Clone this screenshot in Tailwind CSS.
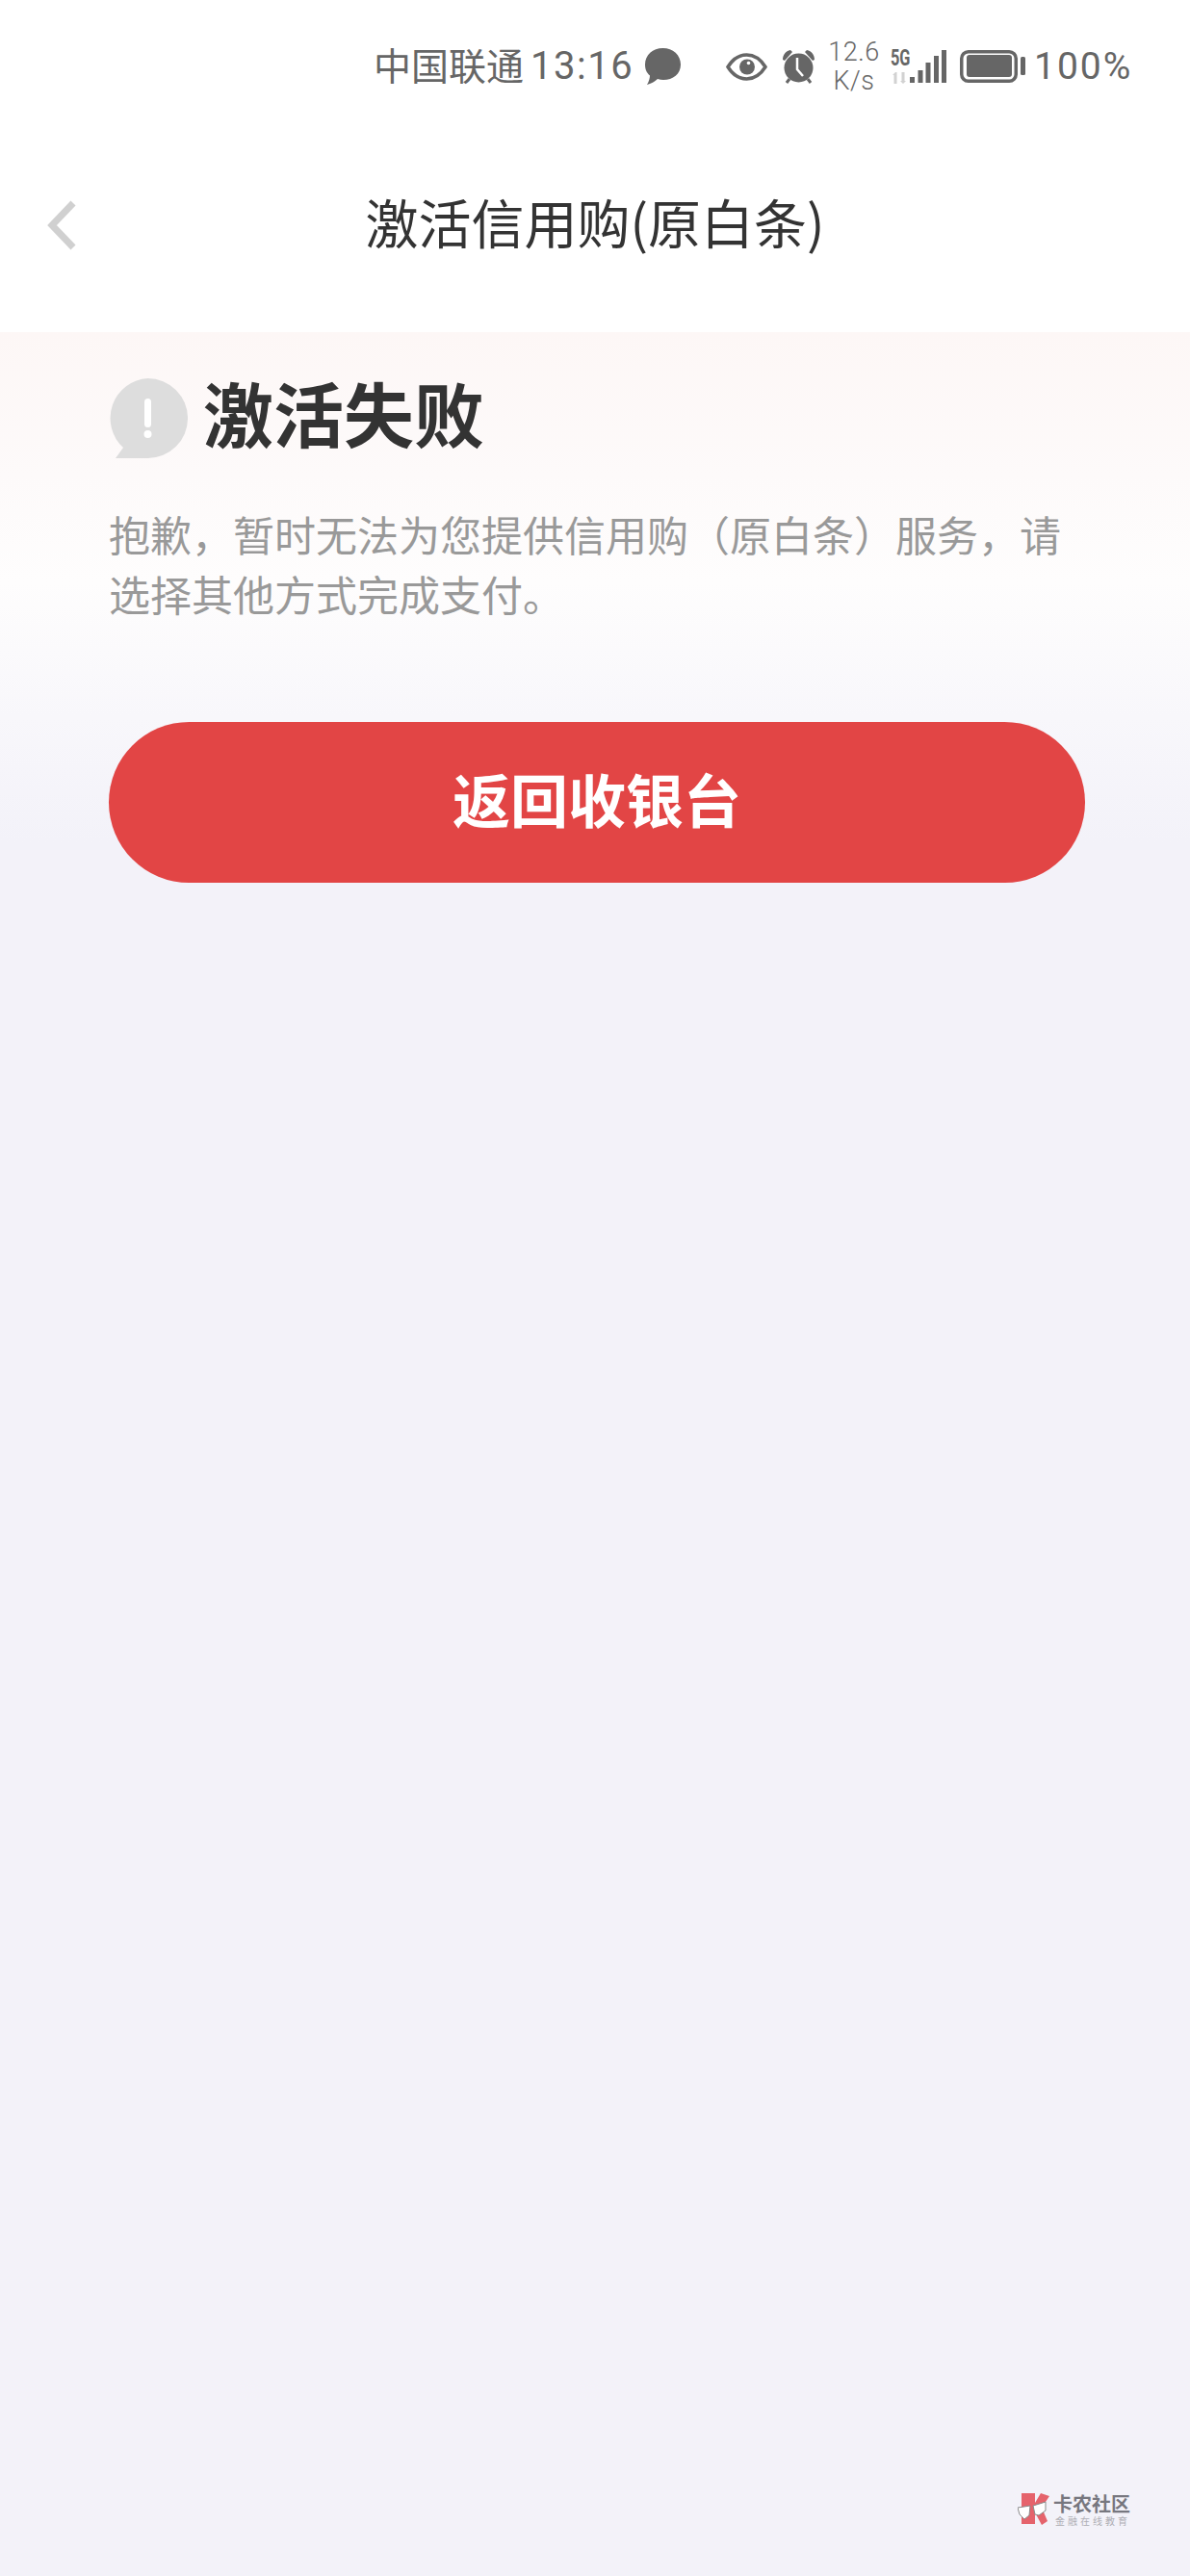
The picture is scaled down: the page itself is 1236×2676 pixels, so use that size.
<!DOCTYPE html>
<html lang="zh-CN">
<head>
    <meta charset="utf-8"/>
    <meta content="width=device-width, initial-scale=1.0" name="viewport"/>
    <title>激活信用购</title>
    <script src="https://cdn.jsdelivr.net/npm/@tailwindcss/browser@4"></script>
</head>
<body class="bg-[#f3f2f9] font-['Noto_Sans_CJK_SC','Noto_Sans',sans-serif] antialiased">
    <div class="relative flex h-[2676px] w-[1236px] flex-col overflow-hidden">
        <!-- Status bar -->
        <div class="flex h-[138px] items-center bg-white pl-[388px] text-[#666666]">
            <span class="mb-[6px] w-[156px] text-[39px] leading-none">中国联通</span>
            <span class="ml-[7px] w-[104px] font-['Roboto',sans-serif] text-[40px] leading-none tracking-[1.5px]">13:16</span>
            <svg class="ml-[14px] h-[38px] w-[38px]" viewBox="0 0 38 38" fill="#666666"><path d="M19.500 0C30 0 38 7 38 17C38 27 30 33 20 33C18 33 16 32.500 14 32C11 35 7 37 3 38C5 35 6 31 6 28.500C2 25 1 21 1 17C1 7 9 0 19.500 0Z"/></svg>
            <svg class="ml-[47px] h-[29px] w-[43px]" viewBox="0 0 43 29"><path d="M2 14.500C8 5 15 2 21.500 2C28 2 35 5 41 14.500C35 24 28 27 21.500 27C15 27 8 24 2 14.500Z" fill="none" stroke="#666666" stroke-width="3.500"/><circle cx="22" cy="14.500" r="8" fill="#666666"/><circle cx="23.500" cy="10.500" r="1.800" fill="#ffffff"/></svg>
            <svg class="ml-[15px] h-[36px] w-[35px]" viewBox="0 0 35 36" fill="#666666"><circle cx="17.500" cy="19.500" r="15"/><path d="M1 11C1 6 4 2 9 1L11 3L3 12ZM34 11C34 6 31 2 26 1L24 3L32 12Z"/><path d="M8 31L5 35M27 31L30 35" stroke="#666666" stroke-width="3"/><path d="M16 9V21L22 28" fill="none" stroke="#ffffff" stroke-width="2.500"/></svg>
            <div class="ml-[12px] flex w-[56px] flex-col items-center font-['Roboto',sans-serif] text-[27px] font-light leading-[30px] tracking-[0.5px]">
                <span>12.6</span>
                <span>K/s</span>
            </div>
            <div class="relative ml-[10px] h-[36px] w-[58px]">
                <span class="absolute left-0 top-[-3px] origin-left scale-x-[.68] font-['Roboto',sans-serif] text-[24px] font-bold leading-[24px]">5G</span>
                <svg class="absolute inset-0 h-[36px] w-[58px]" viewBox="0 0 58 36"><path d="M5 24L2 27H3.500V36H6.500V24ZM13 36L10 33H11.500V24H14.500V33H16L13 36" fill="#d2d2d2"/><path d="M20 29H25V35H20ZM28.500 22H33.500V35H28.500ZM36.500 14H41.500V35H36.500ZM45 7H50V35H45ZM53 1H58V35H53Z" fill="#666666"/></svg>
            </div>
            <svg class="ml-[14px] h-[34px] w-[68px]" viewBox="0 0 68 34"><rect x="1.750" y="1.750" width="56.500" height="30.500" rx="7" fill="none" stroke="#666666" stroke-width="3.500"/><rect x="7" y="5" width="47" height="23" rx="3" fill="#666666"/><rect x="63" y="7" width="5" height="19" rx="1.500" fill="#666666"/></svg>
            <span class="ml-[9px] font-['Roboto',sans-serif] text-[39px] leading-none tracking-[2px]">100%</span>
        </div>

        <!-- Title bar -->
        <div class="relative flex h-[207px] justify-center bg-white pt-[55px]">
            <svg class="absolute left-[47px] top-[69px] h-[54px] w-[34px]" viewBox="0 0 34 54" fill="none" stroke="#d0d0d0" stroke-width="7"><path d="M29 4L7 27L29 50"/></svg>
            <h1 class="text-[55px] leading-[72px] text-[#333333]">激活信用购(原白条)</h1>
        </div>

        <!-- Result -->
        <div class="flex-1 bg-[linear-gradient(to_bottom,#fdf7f6_0px,#fdfafa_150px,#fefdfd_260px,#f8f7fb_400px,#f3f2f9_530px)] px-[113px]">
            <div class="mt-[48px] flex items-center">
                <svg class="-ml-[1px] h-[83px] w-[83px] shrink-0" viewBox="0 0 83 83"><path d="M41.500 0A41.500 41.500 0 1 1 41.500 83H8L16 72A41.500 41.500 0 0 1 41.500 0Z" fill="#dddddd"/><rect x="38" y="21" width="7" height="30" rx="3.500" fill="#ffffff"/><circle cx="41.500" cy="58" r="4" fill="#ffffff"/></svg>
                <h2 class="mb-[16px] ml-[16px] text-[73px] font-bold leading-[66px] text-[#333333]">激活失败</h2>
            </div>
            <p class="mt-[47px] text-[43px] leading-[62px] text-[#999999]">抱歉，暂时无法为您提供信用购（原白条）服务，请选择其他方式完成支付。</p>
            <button class="mt-[103px] flex h-[167px] w-[1014px] items-center justify-center rounded-full bg-[#e24545] pb-[10px] text-[60px] font-bold text-white">返回收银台</button>
        </div>

        <!-- Watermark -->
        <div class="absolute left-[1057px] top-[2588px] flex">
            <svg class="h-[36px] w-[34px]" viewBox="0 0 34 36"><path d="M4 2H18V12L24 2L33 5L25 17L31 31L25 35L18 22V34H4Z" fill="#e5636c"/><path d="M0 17L13 15L12 25L7 29L2 24ZM16 15L29 11L29 20L22 25L18 24Z" fill="#ffffff" stroke="#8a8a8a" stroke-width="1"/></svg>
            <div class="ml-[3px] flex flex-col pt-[3px]">
                <span class="text-[20px] font-bold leading-[20px] text-[#77777f]">卡农社区</span>
                <span class="ml-[2px] mt-[2px] text-[10px] leading-[12px] tracking-[3px] text-[#aeaeb4]">金融在线教育</span>
            </div>
        </div>
    </div>
</body>
</html>
